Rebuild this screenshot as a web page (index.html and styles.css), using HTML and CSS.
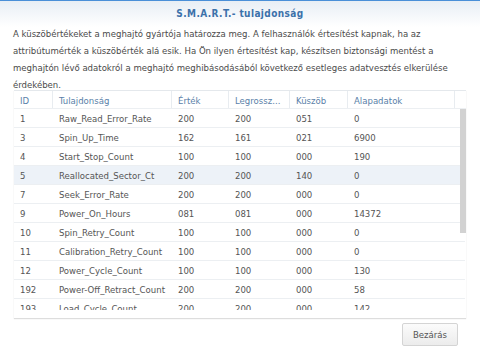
FILE: index.html
```html
<!DOCTYPE html>
<html>
  <head>
    <title>S.M.A.R.T.- tulajdonság</title>
    <meta name="viewport" content="width=device-width, initial-scale=1" />
    <link rel="stylesheet" href="styles.css">
  </head>
  <body>
    <div class="dialog">
      <div class="title">S.M.A.R.T.- tulajdonság</div>
      <p class="desc">A küszöbértékeket a meghajtó gyártója határozza meg. A felhasználók értesítést kapnak, ha az attribútumérték a küszöbérték alá esik. Ha Ön ilyen értesítést kap, készítsen biztonsági mentést a meghajtón lévő adatokról a meghajtó meghibásodásából következő esetleges adatvesztés elkerülése érdekében.</p>

      <div class="grid">
        <div class="row head">
          <div class="cell">ID</div>
          <div class="cell">Tulajdonság</div>
          <div class="cell">Érték</div>
          <div class="cell">Legrossz...</div>
          <div class="cell">Küszöb</div>
          <div class="cell">Alapadatok</div>
          <div class="cell"></div>
        </div>
        <div class="body" id="grid-body"></div>
        <div class="thumb"></div>
      </div>

      <div class="footer">
        <button type="button" class="btn">Bezárás</button>
      </div>
    </div>
    <script>
      const rows = [
        ["1", "Raw_Read_Error_Rate", "200", "200", "051", "0"],
        ["3", "Spin_Up_Time", "162", "161", "021", "6900"],
        ["4", "Start_Stop_Count", "100", "100", "000", "190"],
        ["5", "Reallocated_Sector_Ct", "200", "200", "140", "0"],
        ["7", "Seek_Error_Rate", "200", "200", "000", "0"],
        ["9", "Power_On_Hours", "081", "081", "000", "14372"],
        ["10", "Spin_Retry_Count", "100", "100", "000", "0"],
        ["11", "Calibration_Retry_Count", "100", "100", "000", "0"],
        ["12", "Power_Cycle_Count", "100", "100", "000", "130"],
        ["192", "Power-Off_Retract_Count", "200", "200", "000", "58"],
        ["193", "Load_Cycle_Count", "200", "200", "000", "142"],
      ];

      const body = document.querySelector("#grid-body");

      for (const data of rows) {
        const row = document.createElement("div");
        row.className = "row";
        if (data[0] === "5") row.classList.add("selected");

        for (const value of data.concat([""])) {
          const cell = document.createElement("div");
          cell.className = "cell";
          cell.textContent = value;
          row.append(cell);
        }
        body.append(row);
      }
    </script>
  </body>
</html>
```

FILE: styles.css
```css
body {
  margin: 0;
  font-family: "DejaVu Sans Condensed", "DejaVu Sans", sans-serif;
  font-size: 9.5px;
  color: #444;
  background: #fff;
}

.dialog {
  width: 480px;
  height: 348px;
  display: flex;
  flex-direction: column;
  border-top: 1px solid #4a8fd8;
  box-sizing: border-box;
  background: linear-gradient(#e8eef5, #fff 26px);
}

.title {
  height: 24px;
  padding-top: 2px;
  box-sizing: border-box;
  line-height: 22px;
  text-align: center;
  font-weight: bold;
  font-size: 10px;
  letter-spacing: 0.4px;
  color: #3b71aa;
}

.desc {
  margin: 0;
  padding: 0 13px;
  line-height: 17px;
  color: #4a4a4a;
  height: 65px;
}

.grid {
  position: relative;
  margin: 0 14px;
  height: 228px;
  padding-bottom: 8px;
  box-sizing: border-box;
  display: flex;
  flex-direction: column;
  box-shadow: 0 1px 1px #ddd;
}

.row {
  display: grid;
  grid-template-columns: 39px 119px 57px 61px 58px 107px 1fr;
  height: 19px;
  flex-shrink: 0;
  line-height: 19px;
  border-bottom: 1px solid #eceff2;
  box-sizing: border-box;
}

.head {
  border-top: 1px solid #e4e8ec;
  color: #5a7fa9;
}

.head .cell {
  border-right: 1px solid #e8ecf0;
}

.head .cell:last-child {
  border-right: none;
}

.cell {
  padding-left: 6px;
  white-space: nowrap;
  overflow: hidden;
}

.body {
  flex: 1;
  overflow: hidden;
  color: #555;
}

.body .row {
  margin-right: 1px;
}

.selected {
  background: #edf2f8;
}

.thumb {
  position: absolute;
  right: 0;
  top: 19px;
  width: 6px;
  height: 124px;
  background: #d2d2d2;
}

.footer {
  display: flex;
  justify-content: flex-end;
  padding: 5px 22px 0 0;
}

.btn {
  width: 56px;
  height: 23px;
  font-family: inherit;
  font-size: 9.5px;
  color: #555;
  background: linear-gradient(#fbfbfb, #ececec);
  border: 1px solid #d4d4d4;
  border-radius: 2px;
  padding: 0;
}
```
